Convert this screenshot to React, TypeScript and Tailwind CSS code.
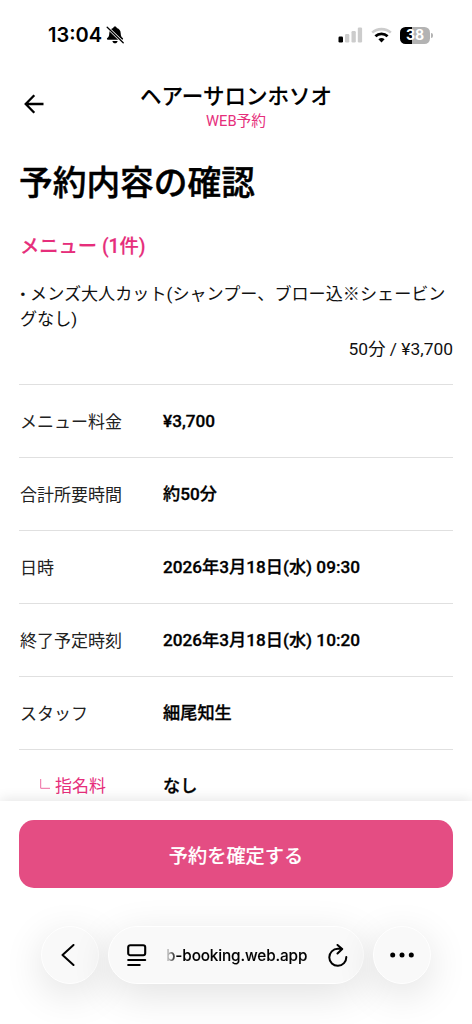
import type { ReactNode } from 'react';

type Detail = { label: string; value: string; sub?: boolean };

const details: Detail[] = [
  { label: 'メニュー料金', value: '¥3,700' },
  { label: '合計所要時間', value: '約50分' },
  { label: '日時', value: '2026年3月18日(水) 09:30' },
  { label: '終了予定時刻', value: '2026年3月18日(水) 10:20' },
  { label: 'スタッフ', value: '細尾知生' },
  { label: '指名料', value: 'なし', sub: true },
];

function BellOff() {
  return (
    <svg width="18" height="18" viewBox="0 0 18 18" aria-hidden="true">
      <path d="M9 .6c1 0 1.700.6 1.800 1.500 2.500.8 3.800 2.600 3.900 5.100.1 2.700.6 3.700 2 4.900.7.700.5 1.700-.6 1.700H1.900c-1.100 0-1.300-1-.6-1.700 1.400-1.200 1.900-2.200 2-4.900.1-2.500 1.400-4.300 3.900-5.100C7.300 1.200 8 .6 9 .6Z" />
      <path d="M6.400 15h5.200c-.3 1.500-1.300 2.300-2.600 2.300S6.700 16.500 6.400 15Z" />
      <path d="M1 1 17.500 17" stroke="white" strokeWidth="2.800" />
      <path d="M1.200 1.200 17.200 16.700" stroke="black" strokeWidth="1.300" strokeLinecap="round" />
    </svg>
  );
}

function StatusBar() {
  return (
    <div className="flex h-[70px] shrink-0 items-center justify-between pr-[39px] pl-12">
      <div className="flex items-center gap-[4px] font-['Inter','Liberation_Sans',sans-serif] text-[20px] leading-6 font-semibold">
        <span>13:04</span>
        <BellOff />
      </div>
      <div className="flex items-center">
        <svg width="25" height="16" viewBox="0 0 25 16" aria-hidden="true">
          <rect x="0.500" y="9.500" width="4.500" height="6" rx="1.200" fill="#000" />
          <rect x="7" y="7" width="4.300" height="8.500" rx="1.200" fill="#ccc" />
          <rect x="13.500" y="4" width="4.300" height="11.500" rx="1.200" fill="#ccc" />
          <rect x="19.800" y="0.500" width="4.300" height="15" rx="1.200" fill="#ccc" />
        </svg>
        <svg className="ml-2" width="21" height="16" viewBox="0 0 21 16" fill="none" aria-hidden="true">
          <path d="M1.200 5.600C6.300.9 14.700.9 19.800 5.600" stroke="#ccc" strokeWidth="2.600" />
          <path d="M4.400 9.200c3.500-3.200 8.700-3.200 12.200 0" stroke="#000" strokeWidth="2.800" />
          <path d="M7.400 12.300c1.700-1.700 4.500-1.700 6.200 0L10.500 15.400Z" fill="#000" />
        </svg>
        <div className="ml-[8px] flex h-[17px] w-[30px] items-center justify-center rounded-[5.500px] bg-[linear-gradient(90deg,#000_40%,#b3b3b3_40%)] font-['Inter',sans-serif] text-[14px] leading-none font-bold text-white">
          38
        </div>
        <div className="ml-[1px] h-[5px] w-[2px] rounded-r-full bg-[#b3b3b3]" />
      </div>
    </div>
  );
}

function Header() {
  return (
    <header className="grid h-[68px] shrink-0 grid-cols-[70px_1fr_70px] items-center">
      <button aria-label="戻る" className="flex justify-start pl-[24px]">
        <svg width="20" height="20" viewBox="0 0 20 20" fill="none" stroke="#000" strokeWidth="2.300" aria-hidden="true">
          <path d="M10.300 1.200 1.700 10l8.600 8.800M1.700 10H19.500" />
        </svg>
      </button>
      <div className="flex flex-col items-center pt-[7px]">
        <div className="text-[21.500px] leading-[26px] font-medium [-webkit-text-stroke:0.150px_#000]">ヘアーサロンホソオ</div>
        <div className="text-[14.700px] leading-[22px] text-[#e62e7b]">WEB予約</div>
      </div>
    </header>
  );
}

function DetailRow({ label, value, sub }: Detail) {
  return (
    <div className="flex h-[73px] items-center border-t-[1.500px] border-[#e0e0e0] text-[17px] leading-6">
      {sub ? (
        <dt className="flex w-36 items-center pl-[21px] text-[#e62e7b]">
          <svg className="mr-[5px] mb-[5px]" width="10" height="10" viewBox="0 0 10 10" fill="none" stroke="#ee6ba2" aria-hidden="true">
            <path d="M.7 0v9.300H10" />
          </svg>
          {label}
        </dt>
      ) : (
        <dt className="w-36 pt-px pl-px text-[#222]">{label}</dt>
      )}
      <dd className="text-[17.200px] font-medium [-webkit-text-stroke:0.300px_#000]">{value}</dd>
    </div>
  );
}

function GlassButton({ label, children }: { label: string; children: ReactNode }) {
  return (
    <button
      aria-label={label}
      className="flex size-[58px] items-center justify-center rounded-full border border-white bg-[#f9f9f9] shadow-[0_10px_40px_rgba(0,0,0,0.12)]"
    >
      {children}
    </button>
  );
}

function BrowserBar() {
  return (
    <nav className="flex justify-center gap-[9px]">
      <GlassButton label="前のページ">
        <svg className="mr-[5px]" width="14" height="22" viewBox="0 0 14 22" fill="none" stroke="#000" strokeWidth="2" strokeLinecap="round" strokeLinejoin="round" aria-hidden="true">
          <path d="M12.500 1 1.500 11l11 10" />
        </svg>
      </GlassButton>
      <div className="flex h-[58px] w-[256px] items-center rounded-full border border-white bg-[#f9f9f9] pl-[18px] shadow-[0_10px_40px_rgba(0,0,0,0.12)]">
        <svg width="20" height="24" viewBox="0 0 20 24" fill="none" stroke="#000" strokeWidth="2.100" strokeLinecap="round" aria-hidden="true">
          <rect x="1.200" y="2.200" width="17" height="10" rx="2" />
          <path d="M1.200 17h17M1.200 22h11.500" />
        </svg>
        <div className="ml-[18px] w-[147px] bg-[linear-gradient(90deg,transparent,#000_12px)] bg-clip-text pt-px pl-[1px] font-['Inter',sans-serif] text-[15.300px] leading-6 font-medium tracking-[-0.120px] whitespace-nowrap text-transparent [-webkit-text-stroke:0.100px_transparent]">
          b-booking.web.app
        </div>
        <svg className="ml-[16px]" width="20" height="23" viewBox="0 0 20 23" fill="none" stroke="#000" strokeWidth="2" strokeLinecap="round" strokeLinejoin="round" aria-hidden="true">
          <path d="M18.300 13a8.500 8.500 0 1 1-8.500-8.200H14M9.500 1l4.700 4-4.700 4.500" />
        </svg>
      </div>
      <GlassButton label="その他">
        <svg width="24" height="6" viewBox="0 0 24 6" aria-hidden="true">
          <circle cx="2.700" cy="3" r="2.500" />
          <circle cx="12" cy="3" r="2.500" />
          <circle cx="21.300" cy="3" r="2.500" />
        </svg>
      </GlassButton>
    </nav>
  );
}

export default function App() {
  return (
    <div className="flex h-screen w-full flex-col overflow-hidden bg-white font-['Roboto','Noto_Sans_CJK_JP',sans-serif] text-black">
      <StatusBar />
      <Header />
      <main className="min-h-0 flex-1 overflow-hidden px-[19px]">
        <h1 className="mt-[25px] text-[33.700px] leading-[42px] font-medium [-webkit-text-stroke:0.450px_#000]">予約内容の確認</h1>
        <h2 className="mt-[28px] pl-px text-[19.300px] leading-7 font-medium text-[#e62e7b] [-webkit-text-stroke:0.150px_#e62e7b]">メニュー (1件)</h2>
        <div className="mt-[21px] text-[17.130px] leading-[25px] text-[#111]">
          <p className="pl-px">• メンズ大人カット(シャンプー、ブロー込※シェービングなし)</p>
          <p className="mt-[5px] text-right text-[17.400px]">50分 / ¥3,700</p>
        </div>
        <dl className="mt-[22px]">
          {details.map((detail) => (
            <DetailRow key={detail.label} {...detail} />
          ))}
        </dl>
      </main>
      <footer className="relative h-[223px] shrink-0 bg-white px-[19px] pt-[19px] shadow-[0_-2px_12px_rgba(0,0,0,0.1)]">
        <button className="mb-[38px] h-[68px] w-full rounded-[15px] bg-[#e44d83] pt-[7px] text-[19.200px] font-medium text-white [-webkit-text-stroke:0.120px_#fff]">
          予約を確定する
        </button>
        <BrowserBar />
      </footer>
    </div>
  );
}
